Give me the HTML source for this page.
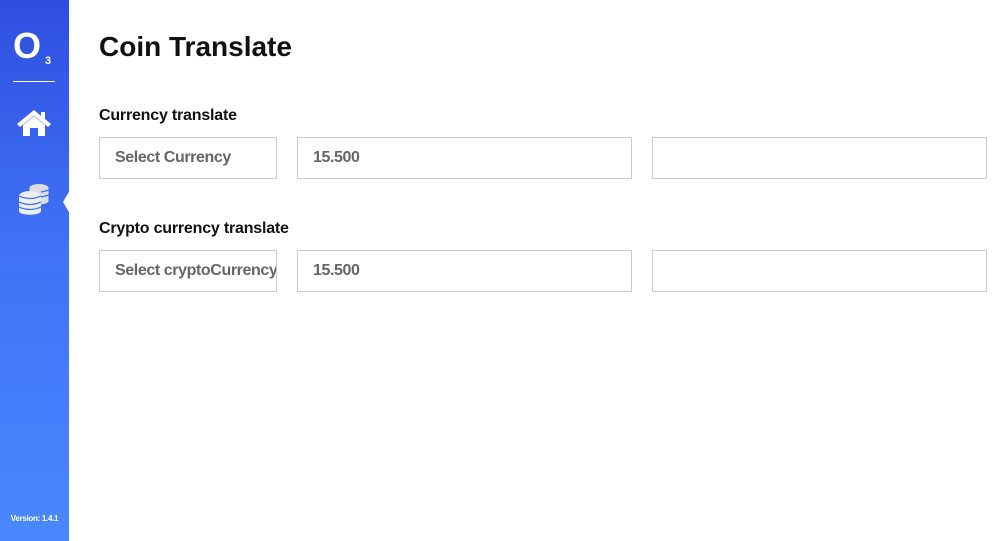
<!DOCTYPE html>
<html><head><meta charset="utf-8"><style>
*{margin:0;padding:0;box-sizing:border-box}
body{width:1007px;height:541px;background:#fff;font-family:"Liberation Sans",sans-serif;position:relative;overflow:hidden}
.side{position:absolute;left:0;top:0;width:69px;height:541px;background:linear-gradient(#2f4ee0,#3f72f5 45%,#4a88ff)}
.logo{position:absolute;left:13px;top:28px;color:#fff;font-weight:bold;font-size:36px;line-height:36px;width:30px}
.sub{position:absolute;left:45px;top:56px;color:#fff;font-weight:bold;font-size:11px;line-height:11px}
.line{position:absolute;left:13px;top:81px;width:42px;height:1px;background:#fff}
.ver{position:absolute;left:0;width:69px;top:514px;text-align:center;color:#fff;font-size:8px;font-weight:bold;letter-spacing:-0.3px}
.notch{position:absolute;left:63px;top:190px;width:0;height:0;border-top:12px solid transparent;border-bottom:12px solid transparent;border-right:7px solid #fff}
h1{position:absolute;left:99px;top:31px;font-size:28px;font-weight:bold;color:#111}
h2{position:absolute;left:99px;font-size:16px;font-weight:bold;color:#111;letter-spacing:-0.2px}
.in{position:absolute;height:42px;border:1px solid #ccc;font-size:16px;font-weight:bold;color:#666;padding:11px 15px;white-space:nowrap;overflow:hidden;letter-spacing:-0.4px}
</style></head><body>
<div class="side">
<div class="logo">O</div><div class="sub">3</div>
<div class="line"></div>
<svg style="position:absolute;left:17px;top:109px" width="34" height="28" viewBox="0 0 34 28"><path d="M17 1 L0 15 L3 18 L17 6.5 L31 18 L34 15 L28 10 V3 H24 V7 Z" fill="#fff"/><path d="M6 16 L17 7 L28 16 V27 H21 V19 H13 V27 H6 Z" fill="#fff"/></svg>
<svg style="position:absolute;left:18px;top:183px" width="32" height="32" viewBox="0 0 32 32"><g fill="#ddd"><ellipse cx="21" cy="5" rx="9.5" ry="4"/><rect x="11.5" y="5" width="19" height="13"/><ellipse cx="21" cy="18" rx="9.5" ry="3.5"/></g><g fill="#eee"><ellipse cx="12" cy="13" rx="11" ry="5"/><rect x="1" y="13" width="22" height="15"/><ellipse cx="12" cy="28" rx="11" ry="3.8"/></g><g stroke="#4576f5" stroke-width="1.3" fill="none"><path d="M1 13 Q12 18 23 13 M1 19 Q12 24 23 19 M1 24 Q12 29 23 24 M23 9 Q27 8.5 30.5 7 M23 14 Q27 13.5 30.5 12"/></g></svg>
<div class="notch"></div>
<div class="ver">Version: 1.4.1</div>
</div>
<h1>Coin Translate</h1>
<h2 style="top:107px">Currency translate</h2>
<div class="in" style="left:99px;top:137px;width:178px">Select Currency</div>
<div class="in" style="left:297px;top:137px;width:335px">15.500</div>
<div class="in" style="left:652px;top:137px;width:335px"></div>
<h2 style="top:220px">Crypto currency translate</h2>
<div class="in" style="left:99px;top:250px;width:178px">Select cryptoCurrency</div>
<div class="in" style="left:297px;top:250px;width:335px">15.500</div>
<div class="in" style="left:652px;top:250px;width:335px"></div>
</body></html>
